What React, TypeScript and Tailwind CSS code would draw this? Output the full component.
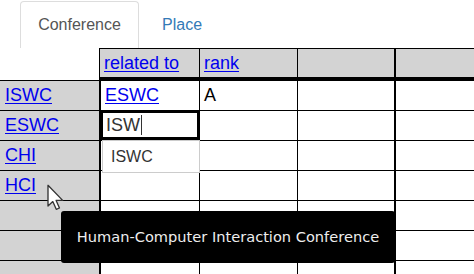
import React from 'react';

const link = 'text-[#0000ee] underline underline-offset-2';

const rows = [
  { head: 'ISWC', rel: 'ESWC', rank: 'A' },
  { head: 'ESWC', rel: '', rank: '' },
  { head: 'CHI', rel: '', rank: '' },
  { head: 'HCI', rel: '', rank: '' },
  { head: '', rel: '', rank: '' },
  { head: '', rel: '', rank: '' },
  { head: '', rel: '', rank: '' },
];

export default function App() {
  return (
    <div className="relative w-[474px] h-[274px] overflow-hidden bg-white font-['Liberation_Sans',Arial,sans-serif] text-[18px] text-black">
      {/* Tabs */}
      <div className="flex h-[48px] items-start pt-[1px]">
        <div className="ml-[20px] h-[47px] w-[119px] border border-b-0 border-[#ddd] rounded-t-[4px] flex items-center justify-center text-[16px] text-[#555] font-['Liberation_Sans',Helvetica,sans-serif]">
          Conference
        </div>
        <div className="h-[47px] pl-[23px] flex items-center text-[16px] text-[#337ab7]">Place</div>
      </div>

      {/* Column headers */}
      <div className="flex h-[33px]">
        <div className="w-[99px] shrink-0 border-b border-black" />
        <div className="w-[101px] shrink-0 bg-[#d3d3d3] border-t border-l border-r border-b-4 border-black flex items-center pl-[4px]">
          <span className={link}>related to</span>
        </div>
        <div className="w-[98px] shrink-0 bg-[#d3d3d3] border-t border-r border-b-4 border-black flex items-center pl-[4px]">
          <span className={link}>rank</span>
        </div>
        <div className="w-[98px] shrink-0 bg-[#d3d3d3] border-t border-r-2 border-b-4 border-black" />
        <div className="flex-1 bg-[#d3d3d3] border-t border-b-4 border-black" />
      </div>

      {/* Body */}
      {rows.map((r, i) => (
        <div key={i} className="flex h-[30px]">
          <div className="w-[101px] shrink-0 bg-[#d3d3d3] border-r-2 border-b border-black flex items-center pl-[5px]">
            {r.head && <span className={link}>{r.head}</span>}
          </div>
          <div className="w-[99px] shrink-0 border-r border-b border-black flex items-center pl-[4px]">
            {r.rel && <span className={link}>{r.rel}</span>}
          </div>
          <div className="w-[98px] shrink-0 border-r border-b border-black flex items-center pl-[4px]">
            {r.rank}
          </div>
          <div className="w-[98px] shrink-0 border-r-2 border-b border-black" />
          <div className="flex-1 border-b border-black" />
        </div>
      ))}

      {/* Cell editor */}
      <div className="absolute left-[100px] top-[110px] w-[100px] h-[30px] border-[3px] border-black bg-white flex items-center pl-[3px] text-[#333]">
        ISW<span className="ml-[1px] inline-block w-[1px] h-[20px] bg-[#333]" />
      </div>
      {/* Autocomplete list */}
      <div className="absolute left-[102px] top-[140px] w-[98px] h-[33px] border border-[#ccc] bg-white flex items-center pl-[8px] text-[16px] text-[#333]">
        ISWC
      </div>

      {/* Mouse cursor */}
      <svg className="absolute left-[46px] top-[184px]" width="20" height="28" viewBox="0 0 14 21">
        <path d="M1 1 L1 16.5 L4.6 13.2 L7.2 19 L9.6 18 L7.1 12.3 L12 12.3 Z" fill="#fff" stroke="#333" strokeWidth="1" strokeLinejoin="round" />
      </svg>

      {/* Tooltip */}
      <div className="absolute left-[61px] top-[211px] w-[334px] h-[52px] bg-black rounded-[3px] flex items-center justify-center pb-[1px] text-[14.6px] text-[#eee] font-['DejaVu_Sans',sans-serif]">
        Human-Computer Interaction Conference
      </div>
    </div>
  );
}
